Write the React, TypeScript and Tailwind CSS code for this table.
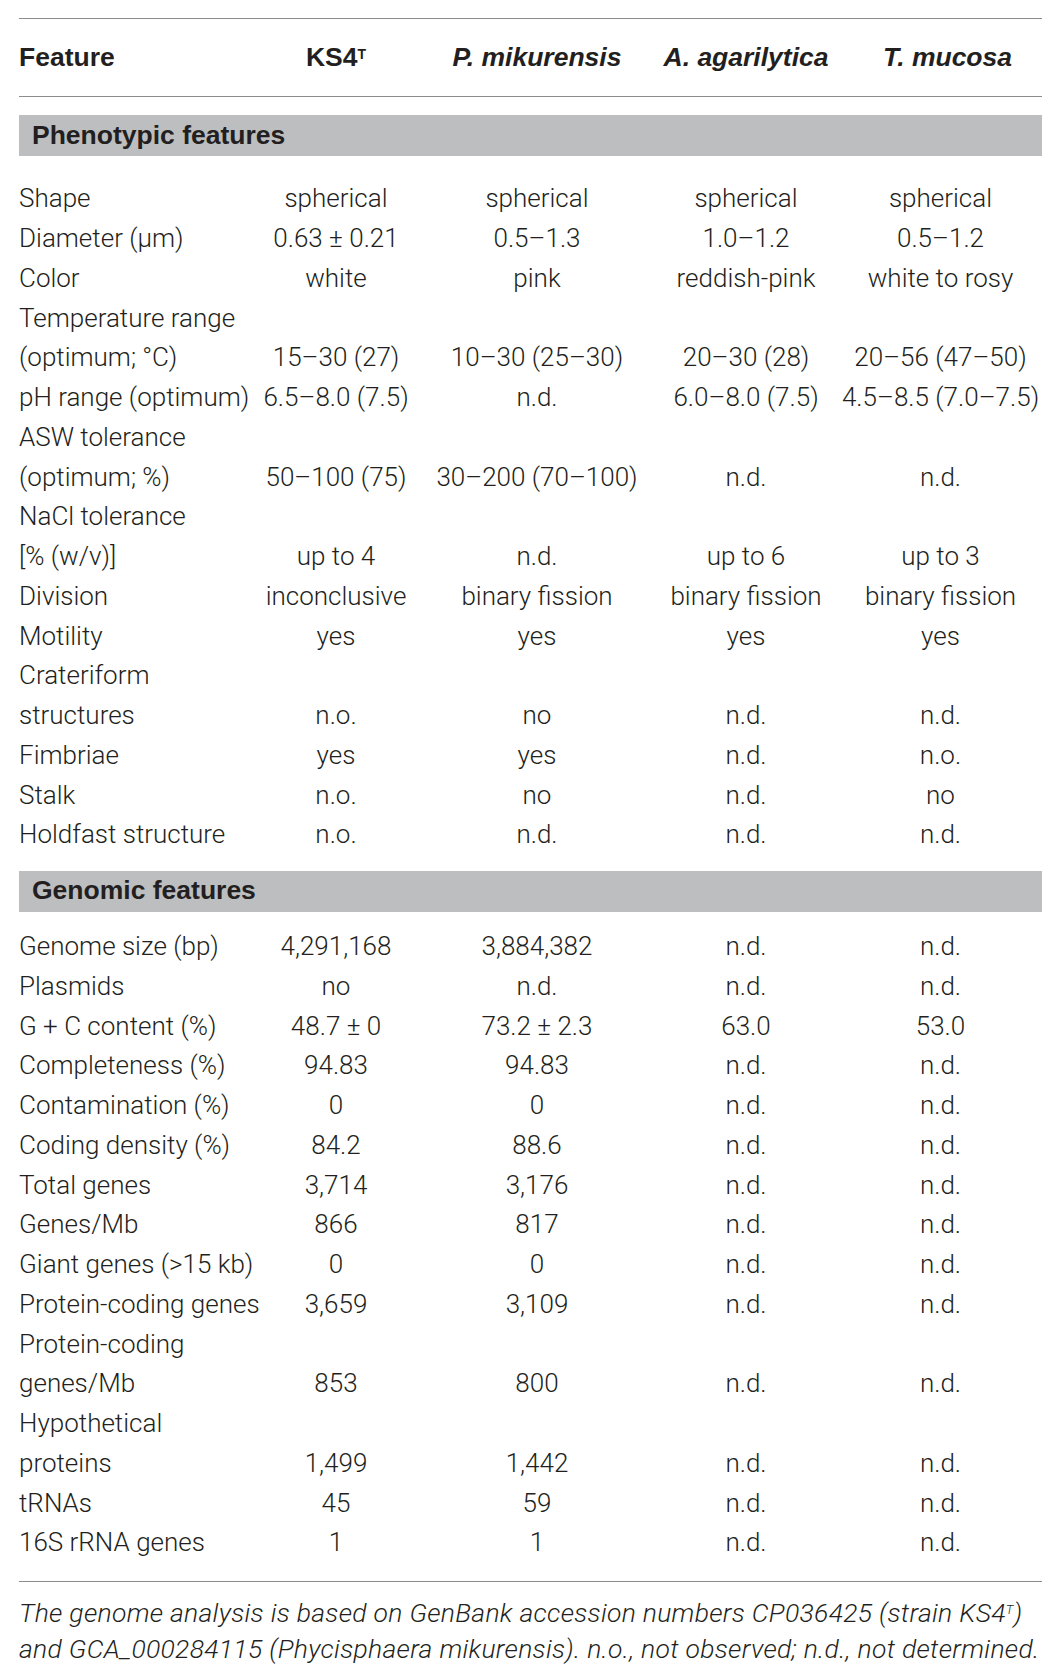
import React from "react";

type Row = { label: string; vals?: string[] };

const phenotypic: Row[] = [
  { label: "Shape", vals: ["spherical", "spherical", "spherical", "spherical"] },
  { label: "Diameter (μm)", vals: ["0.63 ± 0.21", "0.5–1.3", "1.0–1.2", "0.5–1.2"] },
  { label: "Color", vals: ["white", "pink", "reddish-pink", "white to rosy"] },
  { label: "Temperature range" },
  { label: "(optimum; °C)", vals: ["15–30 (27)", "10–30 (25–30)", "20–30 (28)", "20–56 (47–50)"] },
  { label: "pH range (optimum)", vals: ["6.5–8.0 (7.5)", "n.d.", "6.0–8.0 (7.5)", "4.5–8.5 (7.0–7.5)"] },
  { label: "ASW tolerance" },
  { label: "(optimum; %)", vals: ["50–100 (75)", "30–200 (70–100)", "n.d.", "n.d."] },
  { label: "NaCl tolerance" },
  { label: "[% (w/v)]", vals: ["up to 4", "n.d.", "up to 6", "up to 3"] },
  { label: "Division", vals: ["inconclusive", "binary fission", "binary fission", "binary fission"] },
  { label: "Motility", vals: ["yes", "yes", "yes", "yes"] },
  { label: "Crateriform" },
  { label: "structures", vals: ["n.o.", "no", "n.d.", "n.d."] },
  { label: "Fimbriae", vals: ["yes", "yes", "n.d.", "n.o."] },
  { label: "Stalk", vals: ["n.o.", "no", "n.d.", "no"] },
  { label: "Holdfast structure", vals: ["n.o.", "n.d.", "n.d.", "n.d."] },
];

const genomic: Row[] = [
  { label: "Genome size (bp)", vals: ["4,291,168", "3,884,382", "n.d.", "n.d."] },
  { label: "Plasmids", vals: ["no", "n.d.", "n.d.", "n.d."] },
  { label: "G + C content (%)", vals: ["48.7 ± 0", "73.2 ± 2.3", "63.0", "53.0"] },
  { label: "Completeness (%)", vals: ["94.83", "94.83", "n.d.", "n.d."] },
  { label: "Contamination (%)", vals: ["0", "0", "n.d.", "n.d."] },
  { label: "Coding density (%)", vals: ["84.2", "88.6", "n.d.", "n.d."] },
  { label: "Total genes", vals: ["3,714", "3,176", "n.d.", "n.d."] },
  { label: "Genes/Mb", vals: ["866", "817", "n.d.", "n.d."] },
  { label: "Giant genes (>15 kb)", vals: ["0", "0", "n.d.", "n.d."] },
  { label: "Protein-coding genes", vals: ["3,659", "3,109", "n.d.", "n.d."] },
  { label: "Protein-coding" },
  { label: "genes/Mb", vals: ["853", "800", "n.d.", "n.d."] },
  { label: "Hypothetical" },
  { label: "proteins", vals: ["1,499", "1,442", "n.d.", "n.d."] },
  { label: "tRNAs", vals: ["45", "59", "n.d.", "n.d."] },
  { label: "16S rRNA genes", vals: ["1", "1", "n.d.", "n.d."] },
];

const cols = "grid grid-cols-[231px_172px_230px_188px_201px]";

function DataRow({ row }: { row: Row }) {
  return (
    <div className={`${cols} h-[39.75px] items-center whitespace-nowrap`}>
      <div>{row.label}</div>
      {(row.vals ?? ["", "", "", ""]).map((v, i) => (
        <div key={i} className="text-center">{v}</div>
      ))}
    </div>
  );
}

function SectionBar({ title }: { title: string }) {
  return (
    <div className="flex h-[41px] items-center bg-[#bcbec0] pl-[13px] font-['Liberation_Sans',Arial,sans-serif] text-[26.5px] font-bold">
      {title}
    </div>
  );
}

export default function App() {
  return (
    <div className="min-h-[1679px] w-[1061px] bg-white px-[19px] pt-[18px] font-['Roboto','Liberation_Sans',Arial,sans-serif] text-[26px] font-light text-[#231f20]">
      <div className="border-t-[1.5px] border-[#8c8c8c]" />
      <div className={`${cols} h-[77px] items-center whitespace-nowrap font-['Liberation_Sans',Arial,sans-serif] text-[26.5px] font-bold`}>
        <div>Feature</div>
        <div className="text-center">
          KS4<span className="relative -top-[7px] text-[14px] leading-none">T</span>
        </div>
        <div className="text-center italic">P. mikurensis</div>
        <div className="text-center italic">A. agarilytica</div>
        <div className="pl-[14px] text-center italic">T. mucosa</div>
      </div>
      <div className="border-t-[1.5px] border-[#8c8c8c]" />

      <div className="mt-[18px]">
        <SectionBar title="Phenotypic features" />
      </div>
      <div className="mt-[23px]">
        {phenotypic.map((r, i) => (
          <DataRow key={i} row={r} />
        ))}
      </div>

      <div className="mt-[16px]">
        <SectionBar title="Genomic features" />
      </div>
      <div className="mt-[15px]">
        {genomic.map((r, i) => (
          <DataRow key={i} row={r} />
        ))}
      </div>

      <div className="mt-[18px] border-t-[1.5px] border-[#8c8c8c]" />
      <p className="mt-[13px] whitespace-nowrap text-[26.5px] italic leading-[36px] tracking-[0.3px]">
        The genome analysis is based on GenBank accession numbers CP036425 (strain KS4
        <span className="relative -top-[8px] text-[13px] leading-none">T</span>)
        <br />
        and GCA_000284115 (Phycisphaera mikurensis). n.o., not observed; n.d., not determined.
      </p>
    </div>
  );
}
